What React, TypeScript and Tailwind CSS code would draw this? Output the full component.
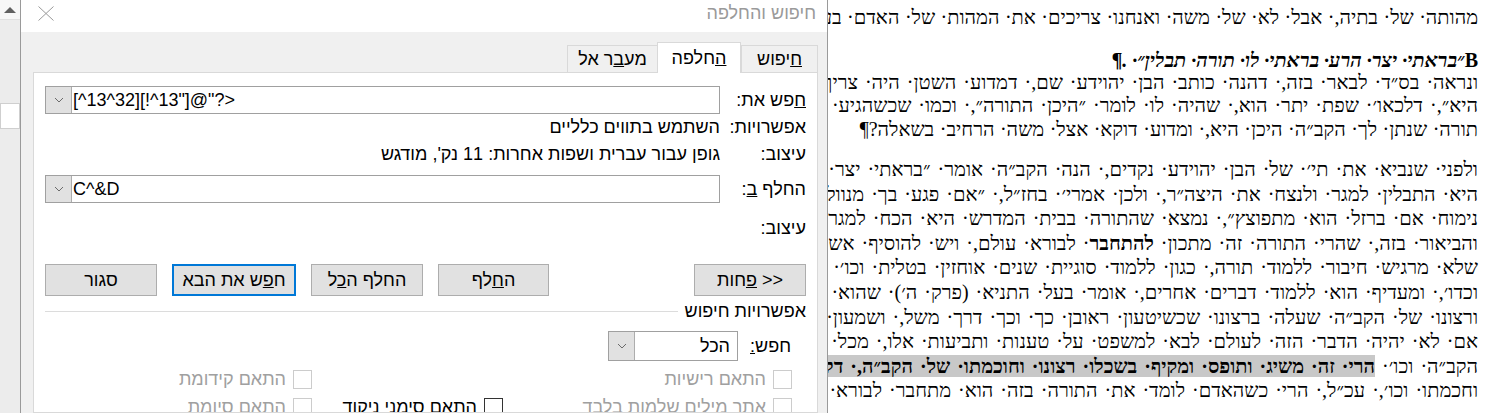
import type { ReactNode } from "react";

const ui = "font-['Liberation_Sans','DejaVu_Sans',sans-serif]";

// Word shows spaces as raised dots when formatting marks are on
const marks = (s: string) => s.replace(/ /g, "\u00B7 ");

function Chevron() {
  return (
    <svg width="10" height="6" viewBox="0 0 10 6" fill="none">
      <path d="M1 1 L5 5 L9 1" stroke="#6b6b6b" strokeWidth="1" />
    </svg>
  );
}

function ScrollStrip() {
  return (
    <div className="flex w-[20px] shrink-0 flex-col bg-[#ececec]">
      <div className="flex h-[20px] shrink-0 items-center justify-center border-b border-[#e0e0e0] bg-[#f7f7f7]">
        <svg width="12" height="6" viewBox="0 0 12 6">
          <path d="M0 6 L6 0 L12 6 Z" fill="#606060" />
        </svg>
      </div>
      <div className="mt-[83px] h-[26px] shrink-0 border border-[#cfcfcf] bg-white" />
    </div>
  );
}

function ComboInput({ value }: { value: string }) {
  return (
    <div dir="ltr" className="flex h-full flex-1 border border-[#a0a0a0] bg-white">
      <div className="flex w-[26px] items-center justify-center border-r border-[#adadad] bg-[#e1e1e1]">
        <Chevron />
      </div>
      <div className="flex items-center pl-[1px]">
        <bdo dir="ltr">{value}</bdo>
      </div>
    </div>
  );
}

function Row({ label, children, className = "" }: { label: ReactNode; children?: ReactNode; className?: string }) {
  return (
    <div className={`flex shrink-0 items-center ${className}`}>
      <span className="w-[86px] shrink-0">{label}</span>
      {children}
    </div>
  );
}

function Btn({ children, primary, className = "" }: { children: ReactNode; primary?: boolean; className?: string }) {
  return (
    <div
      className={`flex h-[32px] items-center justify-center bg-[#e1e1e1] ${
        primary ? "border-2 border-[#0078d7]" : "border border-[#adadad]"
      } ${className}`}
    >
      {children}
    </div>
  );
}

function Check({ label, enabled }: { label?: string; enabled?: boolean }) {
  if (!label) return <div />;
  return (
    <div className="flex h-[28px] items-center gap-[7px]">
      <span
        className={`h-[19px] w-[19px] shrink-0 border bg-white ${
          enabled ? "border-[#333333]" : "border-[#cccccc]"
        }`}
      />
      <span className={enabled ? "text-black" : "text-[#a0a0a0]"}>{label}</span>
    </div>
  );
}

function FindReplaceDialog() {
  return (
    <div
      dir="rtl"
      className={`flex h-[413px] w-[808px] shrink-0 flex-col overflow-hidden border-x border-[#9a9a9a] bg-[#f0f0f0] text-[18px] leading-none text-black ${ui}`}
    >
      <div className="flex h-[32px] shrink-0 items-center justify-between bg-white pb-[6px] pl-[17px] pr-[11px]">
        <span className="text-[#9a9a9a]">חיפוש והחלפה</span>
        <svg width="16" height="15" viewBox="0 0 16 15" fill="none">
          <path d="M0.5 0.5 L15.5 14.5 M15.5 0.5 L0.5 14.5" stroke="#9a9a9a" strokeWidth="1" />
        </svg>
      </div>

      <div className="flex h-[40px] shrink-0 items-end pr-[9px]">
        <div className="flex h-[27px] w-[77px] items-center justify-center border-x border-t border-[#d9d9d9]">
          <span>
            <span className="underline">ח</span>יפוש
          </span>
        </div>
        <div className="relative z-10 -mb-px flex h-[31px] w-[84px] items-center justify-center border-x border-t border-[#d9d9d9] bg-white">
          <span>
            <span className="underline">ה</span>חלפה
          </span>
        </div>
        <div className="flex h-[27px] w-[90px] items-center justify-center border-l border-t border-[#d9d9d9]">
          <span>
            מע<span className="underline">ב</span>ר אל
          </span>
        </div>
      </div>

      <div className="ml-[12px] mr-[9px] flex min-h-0 flex-1 flex-col overflow-hidden border border-[#d9d9d9] bg-white px-[11px]">
        <Row
          className="mt-[13px] h-[28px]"
          label={
            <>
              <span className="underline">ח</span>פש את:
            </>
          }
        >
          <ComboInput value={'[^13^32][!^13"]@"?>'} />
        </Row>
        <Row className="h-[26px]" label="אפשרויות:">
          <span>השתמש בתווים כלליים</span>
        </Row>
        <Row className="h-[28px]" label="עיצוב:">
          <span>גופן עבור עברית ושפות אחרות: 11 נק', מודגש</span>
        </Row>
        <Row
          className="mt-[7px] h-[28px]"
          label={
            <>
              החלף <span className="underline">ב</span>:
            </>
          }
        >
          <ComboInput value="C^&D" />
        </Row>
        <Row className="h-[50px]" label="עיצוב:" />

        <div className="mt-[11px] flex shrink-0 justify-between">
          <Btn className="w-[112px]">
            <span>
              {"<< "}
              <span className="underline">פ</span>חות
            </span>
          </Btn>
          <div className="flex gap-[15px]">
            <Btn className="w-[111px]">
              <span>
                ה<span className="underline">ח</span>לף
              </span>
            </Btn>
            <Btn className="w-[112px]">
              <span>
                החלף ה<span className="underline">כ</span>ל
              </span>
            </Btn>
            <Btn primary className="w-[124px]">
              <span>
                ח<span className="underline">פ</span>ש את הבא
              </span>
            </Btn>
            <Btn className="w-[112px]">סגור</Btn>
          </div>
        </div>

        <div className="mt-[4px] flex h-[22px] shrink-0 items-center gap-[7px]">
          <span>אפשרויות חיפוש</span>
          <div className="h-px flex-1 bg-[#dcdcdc]" />
        </div>

        <div className="mt-[9px] flex h-[30px] shrink-0 items-center pr-[15px]">
          <span className="w-[53px] shrink-0">
            חפש<span className="underline">:</span>
          </span>
          <div className="flex h-[30px] w-[130px] border border-[#a0a0a0] bg-white">
            <span className="flex flex-1 items-center pr-[7px]">הכל</span>
            <div className="flex w-[26px] items-center justify-center border-r border-[#adadad] bg-[#e1e1e1]">
              <Chevron />
            </div>
          </div>
        </div>

        <div className="mt-[4px] grid shrink-0 grid-cols-[289px_191px_1fr] pr-[14px]">
          <Check label="התאם רישיות" />
          <Check />
          <Check label="התאם קידומת" />
          <Check label="אתר מילים שלמות בלבד" />
          <Check label="התאם סימני ניקוד" enabled />
          <Check label="התאם סיומת" />
        </div>
      </div>
    </div>
  );
}

function Line({ children, className = "" }: { children: ReactNode; className?: string }) {
  return <div className={`whitespace-nowrap ${className}`}>{children}</div>;
}

function DocumentPage() {
  return (
    <div
      dir="rtl"
      className="min-w-0 flex-1 overflow-hidden bg-white pr-[15px] pt-[5px] font-['Liberation_Serif','DejaVu_Serif',serif] text-[20px] leading-[24.6px] text-black [word-spacing:2px]"
    >
      <Line className="[word-spacing:0.5px]">
        {marks("מהותה של בתיה, אבל לא של משה ואנחנו צריכים את המהות של האדם בעצמו, וזהו עיקר הדבר")}
      </Line>

      <Line className="mt-[19px] font-bold leading-[22px] [word-spacing:0px]">
        B<span className="italic">{marks("״בראתי יצר הרע בראתי לו תורה תבלין״ .")}¶</span>
      </Line>

      <div className="leading-[23.5px]">
        <Line>{marks("ונראה בס״ד לבאר בזה, דהנה כותב הבן יהוידע שם, דמדוע השטן היה צריך לומר להקב״ה")}</Line>
        <Line>{marks("היא״, דלכאו׳ שפת יתר הוא, שהיה לו לומר ״היכן התורה״, וכמו שכשהגיע משה לשאול")}</Line>
        <Line className="[word-spacing:0.5px]">
          {marks("תורה שנתן לך הקב״ה היכן היא, ומדוע דוקא אצל משה הרחיב בשאלה?")}¶
        </Line>
      </div>

      <div className="mt-[16px]">
        <Line>{marks("ולפני שנביא את תי׳ של הבן יהוידע נקדים, הנה הקב״ה אומר ״בראתי יצר הרע בראתי לו")}</Line>
        <Line>{marks("היא התבלין למגר ולנצח את היצה״ר, ולכן אמרי׳ בחז״ל, ״אם פגע בך מנוול זה משכהו")}</Line>
        <Line>{marks("נימוח אם ברזל הוא מתפוצץ״, נמצא שהתורה בבית המדרש היא הכח למגר את היצר")}</Line>
        <Line>
          {marks("והביאור בזה, שהרי התורה זה מתכון ")}
          <b>להתחבר</b>
          {marks(" לבורא עולם, ויש להוסיף אשר גם מי")}
        </Line>
        <Line>{marks("שלא מרגיש חיבור ללמוד תורה, כגון ללמוד סוגיית שנים אוחזין בטלית וכו׳ ודומיהן")}</Line>
        <Line>{marks("וכדו׳, ומעדיף הוא ללמוד דברים אחרים, אומר בעל התניא (פרק ה׳) שהוא משיג את")}</Line>
        <Line>{marks("ורצונו של הקב״ה שעלה ברצונו שכשיטעון ראובן כך וכך דרך משל, ושמעון כך וכך")}</Line>
        <Line>{marks("אם לא יהיה הדבר הזה לעולם לבא למשפט על טענות ותביעות אלו, מכל מקום מאחר")}</Line>
        <Line>
          {marks("הקב״ה וכו׳ ")}
          <span className="bg-[#c8c8c8] font-bold">
            {marks("הרי זה משיג ותופס ומקיף בשכלו רצונו וחוכמתו של הקב״ה, דלית מחשבה")}
          </span>
        </Line>
        <Line>{marks("וחכמתו וכו׳, עכ״ל, הרי כשהאדם לומד את התורה בזה הוא מתחבר לבורא עולם ממש")}</Line>
      </div>
    </div>
  );
}

export default function App() {
  return (
    <div className="flex h-[413px] w-[1493px] overflow-hidden bg-white">
      <ScrollStrip />
      <FindReplaceDialog />
      <DocumentPage />
    </div>
  );
}
